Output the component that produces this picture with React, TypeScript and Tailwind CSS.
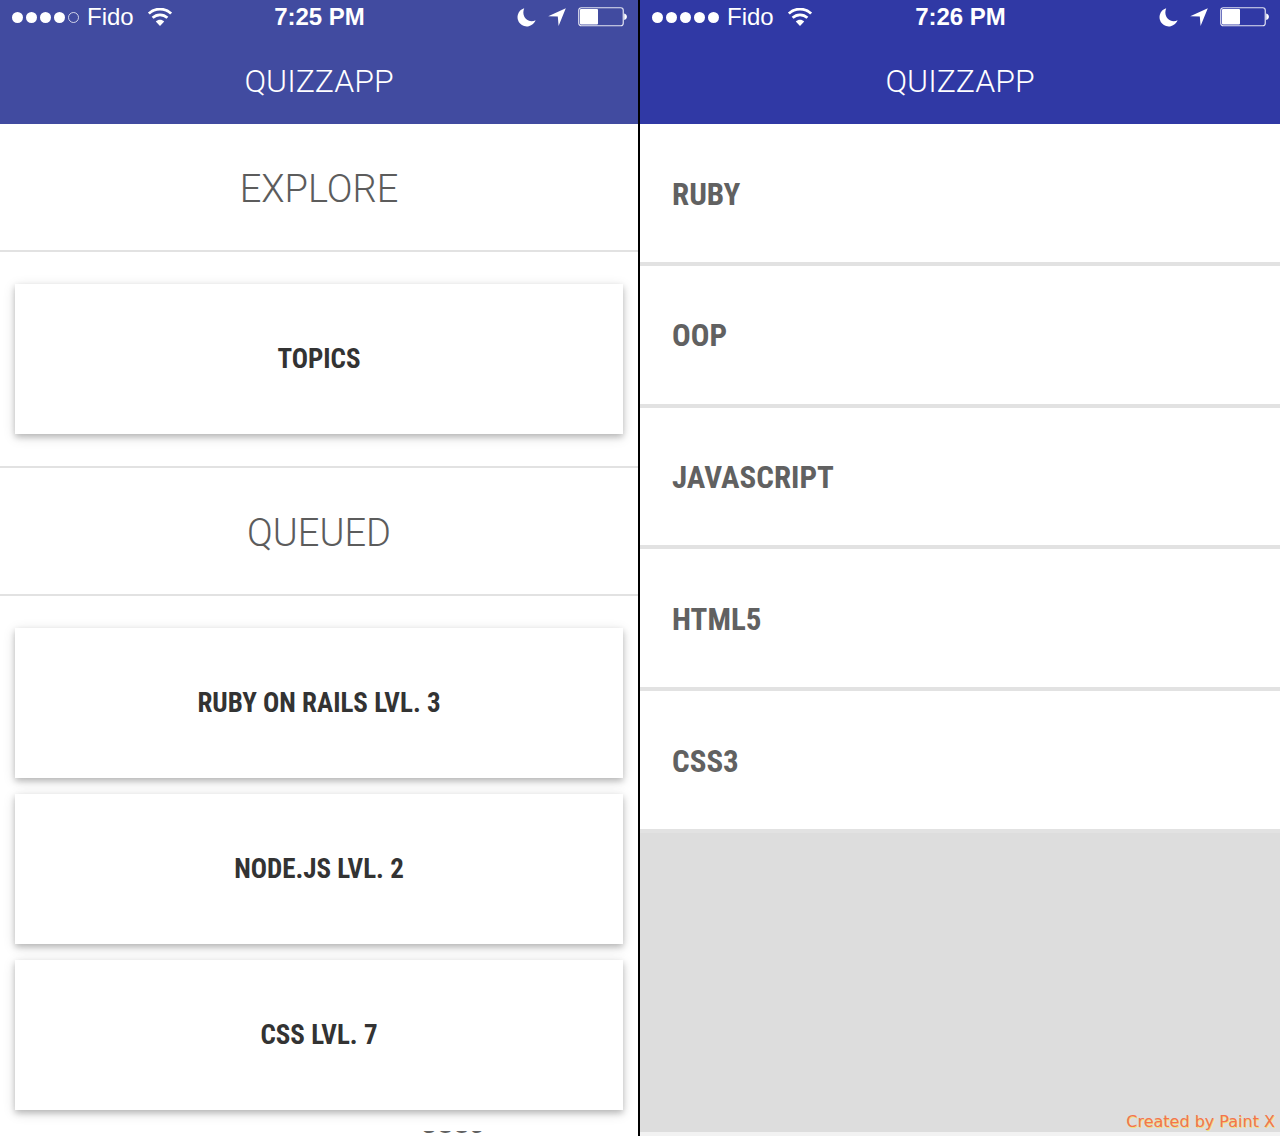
function SignalDots({ filled }: { filled: number }) {
  return (
    <div className="flex gap-[3px]" role="img" aria-label={`Signal ${filled} of 5`}>
      {[0, 1, 2, 3, 4].map((i) => (
        <span
          key={i}
          className={
            i < filled
              ? "size-[11px] rounded-full bg-white"
              : "size-[11px] rounded-full border border-white/75"
          }
        />
      ))}
    </div>
  );
}

function WifiIcon() {
  return (
    <svg width="24" height="18" viewBox="0 0 24 18" fill="none" stroke="white" aria-hidden="true">
      <path d="M0.9 5.6C7 -0.4 17 -0.4 23.1 5.6" strokeWidth="2.8" />
      <path d="M4.6 9.8C8.8 5.8 15.2 5.8 19.4 9.8" strokeWidth="2.7" />
      <path d="M12 18L7.8 13.6C10.2 11.2 13.8 11.2 16.2 13.6Z" fill="white" stroke="none" />
    </svg>
  );
}

function MoonIcon() {
  return (
    <svg width="19" height="19" viewBox="0 0 19 19" fill="white" aria-hidden="true">
      <path d="M7.2 0.2A9.3 9.3 0 1 0 18.6 12.2C12 15.8 3.6 9.4 7.2 0.2Z" />
    </svg>
  );
}

function LocationIcon() {
  return (
    <svg width="18" height="18" viewBox="0 0 18 18" fill="white" aria-hidden="true">
      <path d="M17.8 0.2L10.6 18L9.8 8.4L0.2 8.2Z" />
    </svg>
  );
}

function BatteryIcon() {
  return (
    <svg width="49" height="20" viewBox="0 0 49 20" aria-hidden="true">
      <rect x="0.75" y="0.75" width="44.5" height="18" rx="2.5" fill="none" stroke="white" strokeOpacity="0.85" strokeWidth="1.2" />
      <rect x="2" y="2" width="18" height="15.5" rx="1" fill="white" />
      <path d="M46.2 6.5C49.8 7 49.8 12.5 46.2 13Z" fill="white" />
    </svg>
  );
}

function AppHeader({ filled, time, tone }: { filled: number; time: string; tone: string }) {
  return (
    <header className={`h-[124px] text-white ${tone}`}>
      <div className="grid h-[34px] grid-cols-[1fr_auto_1fr] items-center pr-[11px] pl-3 font-['Liberation_Sans',sans-serif] text-[24px] leading-[34px]">
        <div className="flex items-center gap-2">
          <SignalDots filled={filled} />
          <span>Fido</span>
          <span className="pl-[6px]">
            <WifiIcon />
          </span>
        </div>
        <span className="font-bold">{time}</span>
        <div className="flex items-center justify-end gap-3">
          <MoonIcon />
          <LocationIcon />
          <BatteryIcon />
        </div>
      </div>
      <h1 className="pt-[27px] text-center font-['Roboto',sans-serif] text-[32px] leading-10 font-light">QUIZZAPP</h1>
    </header>
  );
}

function SectionTitle({ children }: { children: string }) {
  return (
    <h2 className="border-b-2 border-[#e2e2e2] pt-[41px] pb-[37px] text-center text-[38px] leading-12 font-light text-[#5c5c5c]">
      {children}
    </h2>
  );
}

function Card({ children }: { children: string }) {
  return (
    <button
      type="button"
      className="h-[150px] w-full bg-white font-['Roboto_Condensed',sans-serif] text-[27px] font-bold text-[#333] shadow-[0_3px_6px_rgba(0,0,0,0.2),0_3px_12px_rgba(0,0,0,0.14)]"
    >
      {children}
    </button>
  );
}

const queued = ["RUBY ON RAILS LVL. 3", "NODE.JS LVL. 2", "CSS LVL. 7"];
const topics = ["RUBY", "OOP", "JAVASCRIPT", "HTML5", "CSS3"];

export default function App() {
  return (
    <div className="grid min-h-screen grid-cols-2 bg-white font-['Roboto',sans-serif]">
      <section className="flex flex-col border-r-2 border-black">
        <AppHeader filled={4} time="7:25 PM" tone="bg-[#414ba0]" />
        <main className="flex flex-1 flex-col">
          <SectionTitle>EXPLORE</SectionTitle>
          <div className="border-b-2 border-[#e2e2e2] px-[15px] py-8">
            <Card>TOPICS</Card>
          </div>
          <SectionTitle>QUEUED</SectionTitle>
          <div className="flex flex-col gap-4 px-[15px] pt-8">
            {queued.map((label) => (
              <Card key={label}>{label}</Card>
            ))}
          </div>
          <div className="mt-[21px] flex h-[3px] items-end overflow-hidden pl-[420px] font-['Roboto_Condensed',sans-serif] text-[30px] leading-[22px] font-bold text-[#616161]">
            <span>CSS3</span>
          </div>
        </main>
      </section>

      <section className="flex flex-col border-b-4 border-[#f2f2f2] bg-[#ddd]">
        <AppHeader filled={5} time="7:26 PM" tone="bg-[#3039a5]" />
        <ul className="grid min-h-[709px] grid-rows-5">
          {topics.map((label) => (
            <li key={label} className="flex border-b-4 border-[#e2e2e2] bg-white">
              <a
                href="#"
                className="flex flex-1 items-center px-8 pt-1 font-['Roboto_Condensed',sans-serif] text-[31px] font-bold text-[#616161]"
              >
                {label}
              </a>
            </li>
          ))}
        </ul>
        <footer className="mt-auto px-[5px] text-right font-['DejaVu_Sans',sans-serif] text-[16px] leading-5 text-[#f4734f] [text-shadow:1px_1px_0_#f0e27a]">
          Created by Paint X
        </footer>
      </section>
    </div>
  );
}
